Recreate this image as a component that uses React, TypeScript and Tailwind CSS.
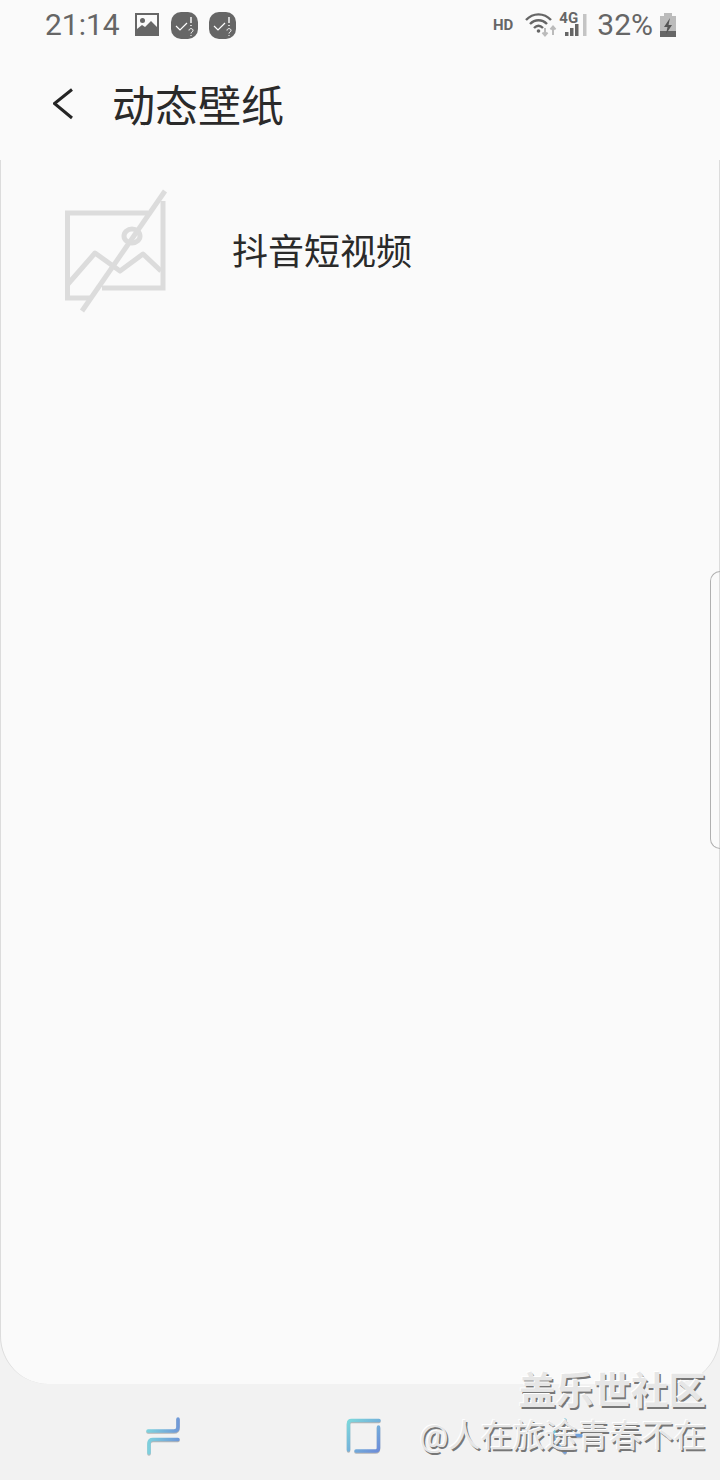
const cjk = "font-['Roboto','Noto_Sans_CJK_SC',sans-serif]";

function ImageNote() {
  return (
    <svg width="24" height="24" viewBox="0 0 24 24">
      <rect x="0" y="0" width="24" height="23" fill="#666" />
      <rect x="2" y="2" width="20" height="19" fill="#fafafa" />
      <path d="M2 21V16l5-4 3 2 6-6 6 6v7z" fill="#666" />
      <circle cx="7.5" cy="7.5" r="2.5" fill="#666" />
    </svg>
  );
}

function PermissionBadge() {
  return (
    <svg width="27" height="27" viewBox="0 0 27 27">
      <rect width="27" height="27" rx="10" fill="#666" />
      <path d="M5 14l4 4 7-7" fill="none" stroke="#fff" strokeWidth="1.2" />
      <path d="M20 5v6M20 13v1" stroke="#fff" strokeWidth="1.4" />
      <path d="M18 18.5c0-2.500 4-2.500 4 0 0 1.500-2 1.500-2 3M20 23v1" fill="none" stroke="#fff" strokeWidth="1" />
    </svg>
  );
}

function WifiIcon() {
  return (
    <svg width="36" height="28" viewBox="0 0 36 28">
      <path d="M1 9c7-7.500 18-7.500 25 0M5 13c5-5 12-5 17 0M9 17c3-3 6-3 9 0" fill="none" stroke="#666" strokeWidth="2.4" />
      <circle cx="13.500" cy="20" r="1.800" fill="#666" />
      <path d="M20 17v7M17.500 21.500l2.500 3 2.500-3" fill="none" stroke="#bbb" strokeWidth="2" />
      <path d="M28 24v-8M25.500 18.500l2.500-3 2.500 3" fill="none" stroke="#bbb" strokeWidth="2" />
    </svg>
  );
}

function SignalIcon() {
  return (
    <svg width="30" height="30" viewBox="0 0 30 30">
      <rect x="6" y="22" width="3.500" height="4" fill="#666" />
      <rect x="11" y="18" width="3.500" height="8" fill="#666" />
      <rect x="16" y="14" width="3.500" height="12" fill="#666" />
      <rect x="24" y="4" width="3.500" height="22" fill="#c4c4c4" />
    </svg>
  );
}

function BatteryIcon() {
  return (
    <svg width="16" height="24" viewBox="0 0 16 24">
      <rect x="4" y="0" width="8" height="3" fill="#bbb" />
      <rect x="0" y="3" width="16" height="21" fill="#bbb" />
      <rect x="0" y="18" width="16" height="6" fill="#666" />
      <path d="M10 5L4 14h3.500L6 21l6-9H8.500z" fill="#555" />
    </svg>
  );
}

function BrokenImage() {
  return (
    <svg width="106" height="128" viewBox="0 0 106 128" className="shrink-0">
      <g fill="none" stroke="#dcdcdc" strokeWidth="5">
        <path d="M85 26H4.500V111H29" />
        <path d="M100 14V101H39" />
        <path d="M5 97L32 66L57 84L80 67L98 84" strokeLinejoin="round" />
        <ellipse cx="69" cy="49" rx="8" ry="7" />
      </g>
      <path d="M19 124L102 4" stroke="#dcdcdc" strokeWidth="5" />
    </svg>
  );
}

function RecentsIcon() {
  return (
    <svg width="36" height="40" viewBox="0 0 36 40" className="drop-shadow-[0_1px_0_rgba(0,0,0,0.25)]">
      <defs>
        <linearGradient id="recents" gradientUnits="userSpaceOnUse" x1="0" x2="36" y1="20" y2="20">
          <stop offset="0" stopColor="#7fd6de" />
          <stop offset="1" stopColor="#6f95d8" />
        </linearGradient>
      </defs>
      <path d="M3 15H29q4 0 4-4V3M33 23.500H8q-4 0-4 4V37" fill="none" stroke="url(#recents)" strokeWidth="3.500" strokeLinecap="round" />
    </svg>
  );
}

function HomeIcon() {
  return (
    <svg width="38" height="38" viewBox="0 0 38 38" className="drop-shadow-[0_1px_0_rgba(0,0,0,0.25)]">
      <defs>
        <linearGradient id="home" gradientUnits="userSpaceOnUse" x1="0" x2="38" y1="0" y2="38">
          <stop offset="0" stopColor="#7fe0dc" />
          <stop offset="1" stopColor="#6a82d8" />
        </linearGradient>
      </defs>
      <path d="M3.500 33V6.500q0-3 3-3H34M33.500 10V31q0 3-3 3H11" fill="none" stroke="url(#home)" strokeWidth="3.500" strokeLinecap="round" />
    </svg>
  );
}

function BackIcon() {
  return (
    <svg width="36" height="38" viewBox="0 0 36 38" className="drop-shadow-[0_1px_0_rgba(0,0,0,0.25)]">
      <defs>
        <linearGradient id="back" gradientUnits="userSpaceOnUse" x1="0" x2="36" y1="0" y2="38">
          <stop offset="0" stopColor="#7fe0dc" />
          <stop offset="1" stopColor="#6a82d8" />
        </linearGradient>
      </defs>
      <path d="M17 3L4 18.500H33M4 20L17 35" fill="none" stroke="url(#back)" strokeWidth="3.500" strokeLinecap="round" strokeLinejoin="round" />
    </svg>
  );
}

export default function App() {
  return (
    <div className={`relative flex flex-col h-[1480px] w-[720px] overflow-hidden bg-[#f2f2f2] ${cjk}`}>
      <div className="bg-[#fafafa]">
        {/* Status bar */}
        <div className="flex items-center h-[50px] pl-[45px] pr-[44px] text-[#666]">
          <span className="text-[30px] leading-none">21:14</span>
          <div className="flex items-center ml-[15px]"><ImageNote /></div>
          <div className="ml-[12px]"><PermissionBadge /></div>
          <div className="ml-[11px]"><PermissionBadge /></div>
          <div className="ml-auto flex items-center">
            <span className="text-[15px] font-bold mr-[12px]">HD</span>
            <WifiIcon />
            <div className="relative ml-[-2px] w-[30px] h-[30px]">
              <SignalIcon />
              <span className="absolute left-0 top-0 text-[15px] font-bold leading-[16px]">4G</span>
            </div>
            <span className="text-[30px] leading-none ml-[8px]">32%</span>
            <div className="ml-[7px]"><BatteryIcon /></div>
          </div>
        </div>

        {/* Title */}
        <div className="flex items-center h-[110px] pl-[53px]">
          <svg width="20" height="32" viewBox="0 0 20 32" className="mt-[-2px] shrink-0">
            <path d="M19 1.500L1.500 15.500L19 30" fill="none" stroke="#252525" strokeWidth="3" />
          </svg>
          <h1 className="ml-[39px] mt-[4px] text-[43px] leading-none font-normal text-[#2a2a2a]">动态壁纸</h1>
        </div>
      </div>

      {/* Content card */}
      <div className="relative h-[1224px] bg-[#fafafa] rounded-b-[48px] border-x border-[#dcdcdc]">
        <div className="flex items-center pl-[62px] pt-[27px]">
          <BrokenImage />
          <span className="ml-[63px] mt-[4px] text-[36px] leading-none text-[#2a2a2a]">抖音短视频</span>
        </div>
        {/* Edge panel handle */}
        <div className="absolute right-[-1px] top-[411px] w-[10px] h-[278px] rounded-l-[10px] border border-r-0 border-[#b0b0b0]" />
      </div>

      {/* Nav bar */}
      <div className="flex items-start flex-1 pl-[145px] pt-[32px]">
        <RecentsIcon />
        <div className="ml-[164px] mt-[1px]"><HomeIcon /></div>
        <div className="ml-[165px] mt-[1px]"><BackIcon /></div>
      </div>

      {/* Watermark */}
      <div className="absolute right-[14px] top-[1368px] flex flex-col items-end text-[#e6e6e6] [text-shadow:-1px_-1px_0_#fff,1.5px_1.5px_0_#777]">
        <span className="text-[37.5px] leading-[46px] font-bold">盖乐世社区</span>
        <span className="text-[32.2px] leading-[44px]">@人在旅途青春不在</span>
      </div>
    </div>
  );
}
